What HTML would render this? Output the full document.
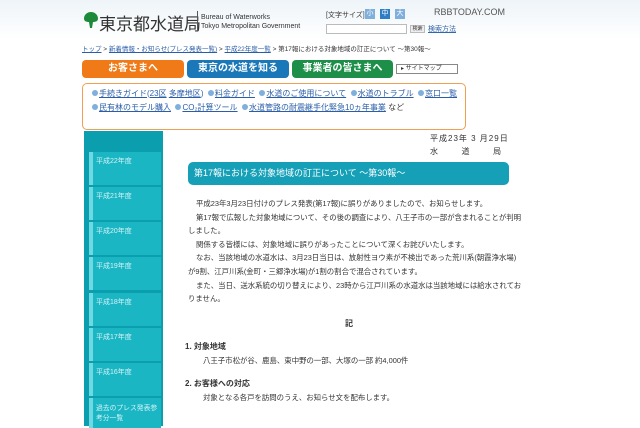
<!DOCTYPE html>
<html><head><meta charset="utf-8"><style>
*{margin:0;padding:0;box-sizing:border-box}
body{width:640px;height:426px;overflow:hidden;background:#fff;font-family:"Liberation Sans","Noto Sans CJK JP",sans-serif;color:#333;position:relative}
.a{position:absolute;white-space:nowrap}
.top{position:absolute;left:0;top:0;width:640px;height:40px;background:linear-gradient(#eef4f8,#fff)}
a{color:#2a5ea8;text-decoration:underline}
.nav{position:absolute;top:60px;height:18px;border-radius:4px;color:#fff;font-size:10px;font-weight:bold;text-align:center;line-height:18px}
.lk{font-size:8px;color:#3366aa}
.dot{display:inline-block;width:6px;height:6px;border-radius:3px;background:#7fb0dd;margin-right:1px;vertical-align:0}
.side{position:absolute;left:84px;top:131px;width:79px;height:295px;background:#0b9eae}
.it{position:absolute;left:5px;width:72px;height:33px;background:#1ab6c4;border-left:4px solid #6fd9e3;color:#d5f3f6;font-size:7px;padding:4px 3px;white-space:nowrap}
.p{position:absolute;left:188px;font-size:7.4px;color:#333;white-space:nowrap}
</style></head><body>
<div class="top"></div>
<svg class="a" style="left:84px;top:12px" width="14" height="16" viewBox="0 0 14 16"><path d="M7 0C3 0 0 3 0 6.5 0 9 2 10 5 10L6 16H8L9 10C12 10 14 9 14 6.5 14 3 11 0 7 0Z" fill="#1d8a3a"/></svg>
<div class="a" style="left:99px;top:10px;font-size:17px;color:#333">東京都水道局</div>
<div class="a" style="left:197px;top:11px;width:1px;height:20px;background:#555"></div>
<div class="a" style="left:201px;top:13px;font-size:7px;line-height:9px;color:#333">Bureau of Waterworks<br>Tokyo Metropolitan Government</div>
<div class="a" style="left:326px;top:10px;font-size:7px">[文字サイズ]</div>
<div class="a" style="left:365px;top:9px;width:10px;height:10px;background:#7fb0dd;color:#fff;font-size:7px;text-align:center;line-height:10px">小</div>
<div class="a" style="left:380px;top:9px;width:10px;height:10px;background:#2d7ec4;color:#fff;font-size:7px;text-align:center;line-height:10px">中</div>
<div class="a" style="left:395px;top:9px;width:10px;height:10px;background:#7fb0dd;color:#fff;font-size:7px;text-align:center;line-height:10px">大</div>
<div class="a" style="left:434px;top:7px;font-size:9px;color:#555">RBBTODAY.COM</div>
<div class="a" style="left:326px;top:24px;width:81px;height:10px;border:1px solid #bbb;background:#fff"></div>
<div class="a" style="left:410px;top:25px;width:15px;height:8px;background:#eee;border:1px solid #bbb;font-size:5px;text-align:center;line-height:7px">検索</div>
<div class="a lk" style="left:428px;top:24px;font-size:7px;text-decoration:underline">検索方法</div>
<div class="a" style="left:82px;top:43px;font-size:6.5px;color:#333"><a>トップ</a> &gt; <a>新着情報・お知らせ(プレス発表一覧)</a> &gt; <a>平成22年度一覧</a> &gt; 第17報における対象地域の訂正について ～第30報～</div>
<div class="nav" style="left:82px;width:102px;background:#f07a18">お客さまへ</div>
<div class="nav" style="left:187px;width:102px;background:#1b78b8">東京の水道を知る</div>
<div class="nav" style="left:292px;width:101px;background:#1d8f48">事業者の皆さまへ</div>
<div class="a" style="left:396px;top:64px;width:62px;height:10px;border:1px solid #888;font-size:6px;line-height:8px;padding-left:4px">▸ サイトマップ</div>
<div class="a" style="left:82px;top:83px;width:384px;height:47px;border:1px solid #f0a050;border-radius:5px"></div>
<div class="a lk" style="left:92px;top:88px"><span class="dot"></span><a>手続きガイド</a>(<a>23区</a> <a>多摩地区</a>) &nbsp;<span class="dot"></span><a>料金ガイド</a> &nbsp;<span class="dot"></span><a>水道のご使用について</a> &nbsp;<span class="dot"></span><a>水道のトラブル</a> &nbsp;<span class="dot"></span><a>窓口一覧</a></div>
<div class="a lk" style="left:92px;top:102px"><span class="dot"></span><a>民有林のモデル購入</a> &nbsp;<span class="dot"></span><a>CO₂計算ツール</a> &nbsp;<span class="dot"></span><a>水道管路の耐震継手化緊急10ヵ年事業</a> <span style="color:#333">など</span></div>
<div class="side">
<div class="it" style="top:21px">平成22年度</div>
<div class="it" style="top:56px">平成21年度</div>
<div class="it" style="top:91px">平成20年度</div>
<div class="it" style="top:126px">平成19年度</div>
<div class="it" style="top:162px">平成18年度</div>
<div class="it" style="top:197px">平成17年度</div>
<div class="it" style="top:232px">平成16年度</div>
<div class="it" style="top:267px;height:30px;font-size:6.8px">過去のプレス発表参<br>考分一覧</div>
</div>
<div class="a" style="left:430px;top:132px;font-size:8px;line-height:13px;letter-spacing:1px">平成23年 3 月29日<br>水&nbsp;&nbsp;&nbsp;&nbsp;&nbsp;&nbsp;&nbsp;道&nbsp;&nbsp;&nbsp;&nbsp;&nbsp;&nbsp;&nbsp;局</div>
<div class="a" style="left:188px;top:162px;width:321px;height:23px;background:#15a0b8;border-radius:5px;color:#fff;font-size:9px;line-height:23px;padding-left:6px">第17報における対象地域の訂正について ～第30報～</div>
<div class="p" style="top:198px;left:196px">平成23年3月23日付けのプレス発表(第17報)に誤りがありましたので、お知らせします。</div>
<div class="p" style="top:212px;left:196px">第17報で広報した対象地域について、その後の調査により、八王子市の一部が含まれることが判明</div>
<div class="p" style="top:225px">しました。</div>
<div class="p" style="top:239px;left:196px">関係する皆様には、対象地域に誤りがあったことについて深くお詫びいたします。</div>
<div class="p" style="top:252px;left:196px">なお、当該地域の水道水は、3月23日当日は、放射性ヨウ素が不検出であった荒川系(朝霞浄水場)</div>
<div class="p" style="top:266px">が9割、江戸川系(金町・三郷浄水場)が1割の割合で混合されています。</div>
<div class="p" style="top:280px;left:196px">また、当日、送水系統の切り替えにより、23時から江戸川系の水道水は当該地域には給水されてお</div>
<div class="p" style="top:293px">りません。</div>
<div class="p" style="top:318px;left:345px;font-weight:bold;font-size:8px">記</div>
<div class="p" style="top:341px;left:185px;font-weight:bold;font-size:8px">1. 対象地域</div>
<div class="p" style="top:355px;left:203px">八王子市松が谷、鹿島、東中野の一部、大塚の一部 約4,000件</div>
<div class="p" style="top:378px;left:185px;font-weight:bold;font-size:8px">2. お客様への対応</div>
<div class="p" style="top:392px;left:203px">対象となる各戸を訪問のうえ、お知らせ文を配布します。</div>
</body></html>
